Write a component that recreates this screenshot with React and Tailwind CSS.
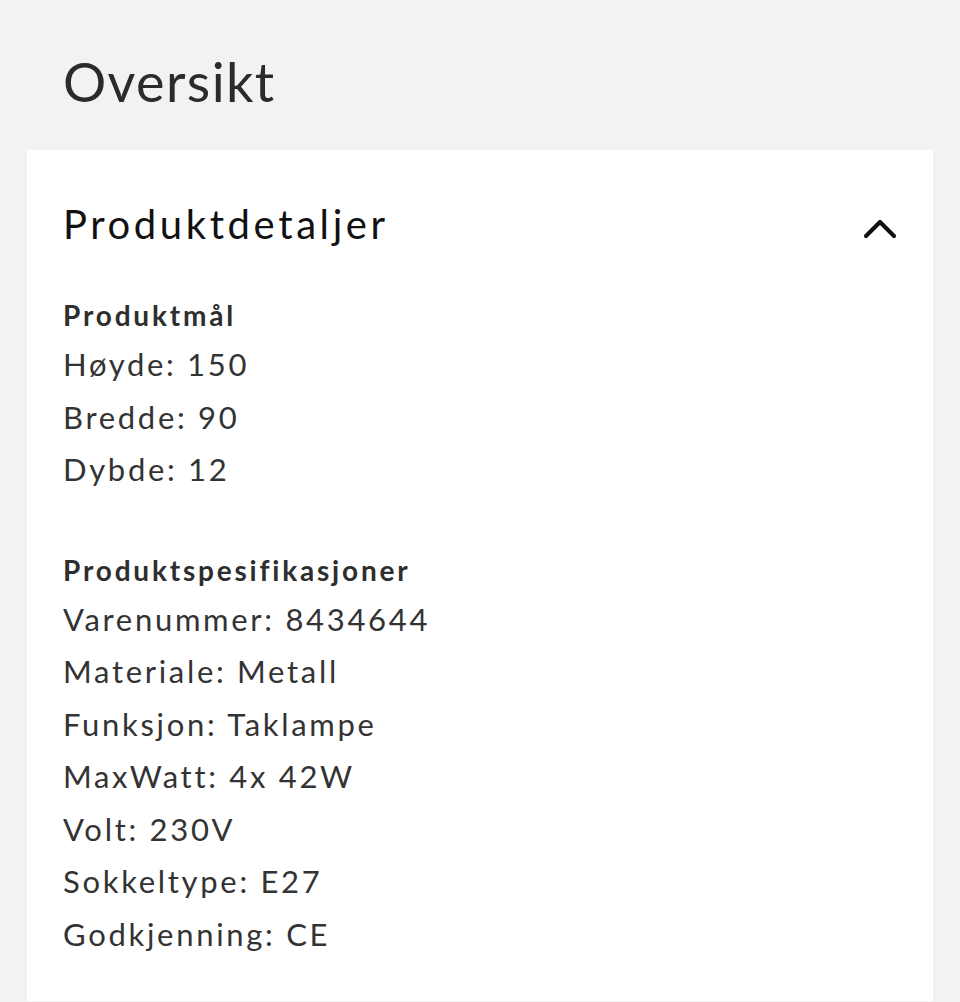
import React from 'react';

const ChevronUp = () => (
    <svg width="34" height="22" viewBox="0 0 34 22" fill="none" stroke="#111" strokeWidth={4.2} strokeLinecap="round" strokeLinejoin="round">
        <path d="M3 19L17 5l14 14" />
    </svg>
);

const dimensions = ['Høyde: 150', 'Bredde: 90', 'Dybde: 12'];

const specs = [
    'Varenummer: 8434644',
    'Materiale: Metall',
    'Funksjon: Taklampe',
    'MaxWatt: 4x 42W',
    'Volt: 230V',
    'Sokkeltype: E27',
    'Godkjenning: CE',
];

const Section = ({ title, items }) => (
    <div>
        <h3 className="text-[28px] font-bold leading-[46px] tracking-[0.1em] text-[#2e2e2e]">{title}</h3>
        {items.map((item) => (
            <p key={item} className="text-[31px] leading-[52.5px] tracking-[0.087em] text-[#333333]">{item}</p>
        ))}
    </div>
);

export default function App() {
    return (
        <div className="min-h-screen bg-[#f2f2f2] px-[27px]" style={{ fontFamily: 'Lato, "Noto Sans", sans-serif' }}>
            <h1 className="pl-[36px] pt-[48px] pb-[34px] text-[54px] leading-[68px] tracking-[0.026em] text-[#2b2b2b]">Oversikt</h1>
            <div className="min-h-[851px] bg-white px-[36px] pt-[44px]">
                <div className="flex items-center justify-between">
                    <h2 className="text-[40px] leading-[60px] tracking-[0.09em] text-[#111111]">Produktdetaljer</h2>
                    <div className="mt-[8px]">
                        <ChevronUp />
                    </div>
                </div>
                <div className="mt-[38px] flex flex-col gap-[51px]">
                    <Section title="Produktmål" items={dimensions} />
                    <Section title="Produktspesifikasjoner" items={specs} />
                </div>
            </div>
        </div>
    );
}
